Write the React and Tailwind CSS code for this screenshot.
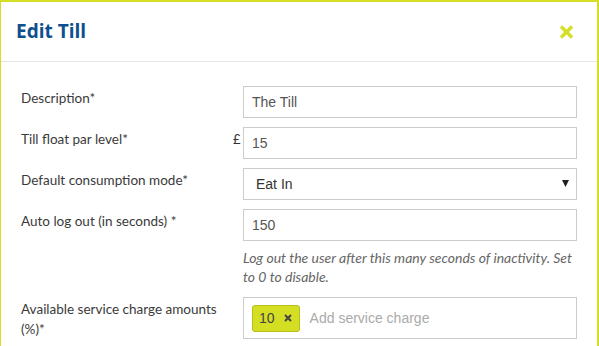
import React from "react";

const labelFont = { fontFamily: "Lato, 'Open Sans', sans-serif" };

function Row({ label, prefix, children }) {
  return (
    <div className="flex items-start">
      <label className="w-[212px] shrink-0 pt-[2px] pr-3 text-[13.5px] leading-5 text-[#3a3a3a]">
        {label}
      </label>
      <span className="w-[10px] shrink-0 pt-[2px] text-[13px] leading-5 text-[#333]">{prefix}</span>
      <div className="w-[334px] shrink-0">{children}</div>
    </div>
  );
}

function TextInput({ value }) {
  return (
    <input
      readOnly
      value={value}
      className="block h-[32px] w-full border border-[#ccc] bg-white px-[8px] text-[14px] text-[#555] outline-none"
      style={{ fontFamily: "'Liberation Sans', Arial, sans-serif" }}
    />
  );
}

export default function App() {
  return (
    <div className="h-[346px] w-[599px] overflow-hidden bg-white" style={labelFont}>
      <div className="h-full w-[599px] border-l border-t-2 border-r-2 border-[#d4de22] bg-white">
        <div className="flex h-[60px] items-center justify-between pl-[15px] pr-[23px] border-b border-[#e5e5e5]">
          <h1 className="text-[19px] font-bold text-[#0d4f8f]" style={{ fontFamily: "'Open Sans', sans-serif" }}>
            Edit Till
          </h1>
          <svg width="15" height="14" viewBox="0 0 15 14">
            <path d="M2 1.5 L13 12.5 M13 1.5 L2 12.5" stroke="#d4de22" strokeWidth="3.4" />
          </svg>
        </div>

        <div className="flex flex-col gap-[9px] pl-[20px] pt-[24px]">
          <Row label="Description*">
            <TextInput value="The Till" />
          </Row>
          <Row label="Till float par level*" prefix="£">
            <TextInput value="15" />
          </Row>
          <Row label="Default consumption mode*">
            <div className="relative">
              <select
                className="block h-[32px] w-full appearance-none border border-[#ccc] bg-white pl-[12px] text-[14px] text-[#333] outline-none"
                style={{ fontFamily: "'Liberation Sans', Arial, sans-serif" }}
                defaultValue="eat"
              >
                <option value="eat">Eat In</option>
                <option value="take">Take Away</option>
              </select>
              <svg className="pointer-events-none absolute right-[8px] top-[12px]" width="7" height="7" viewBox="0 0 7 7">
                <path d="M0 0 H7 L3.5 7 Z" fill="#222" />
              </svg>
            </div>
          </Row>
          <Row label="Auto log out (in seconds) *">
            <TextInput value="150" />
            <p className="mt-[7px] text-[14px] italic leading-[19px] text-[#666]">
              Log out the user after this many seconds of inactivity. Set to 0 to disable.
            </p>
          </Row>
          <div className="pt-[2px]">
            <Row label="Available service charge amounts (%)*">
              <div
                className="flex h-[42px] items-center gap-[10px] border border-[#ccc] bg-white px-[8px] text-[14px]"
                style={{ fontFamily: "'Liberation Sans', Arial, sans-serif" }}
              >
                <span className="flex h-[27px] items-center gap-[9px] rounded-[3px] border border-[#b7bf1a] bg-[#d4de22] pl-[6px] pr-[7px] text-[#444]">
                  10
                  <svg width="8" height="8" viewBox="0 0 8 8">
                    <path d="M1 1 L7 7 M7 1 L1 7" stroke="#444" strokeWidth="2" />
                  </svg>
                </span>
                <span className="text-[#aaa]">Add service charge</span>
              </div>
            </Row>
          </div>
        </div>
      </div>
    </div>
  );
}
